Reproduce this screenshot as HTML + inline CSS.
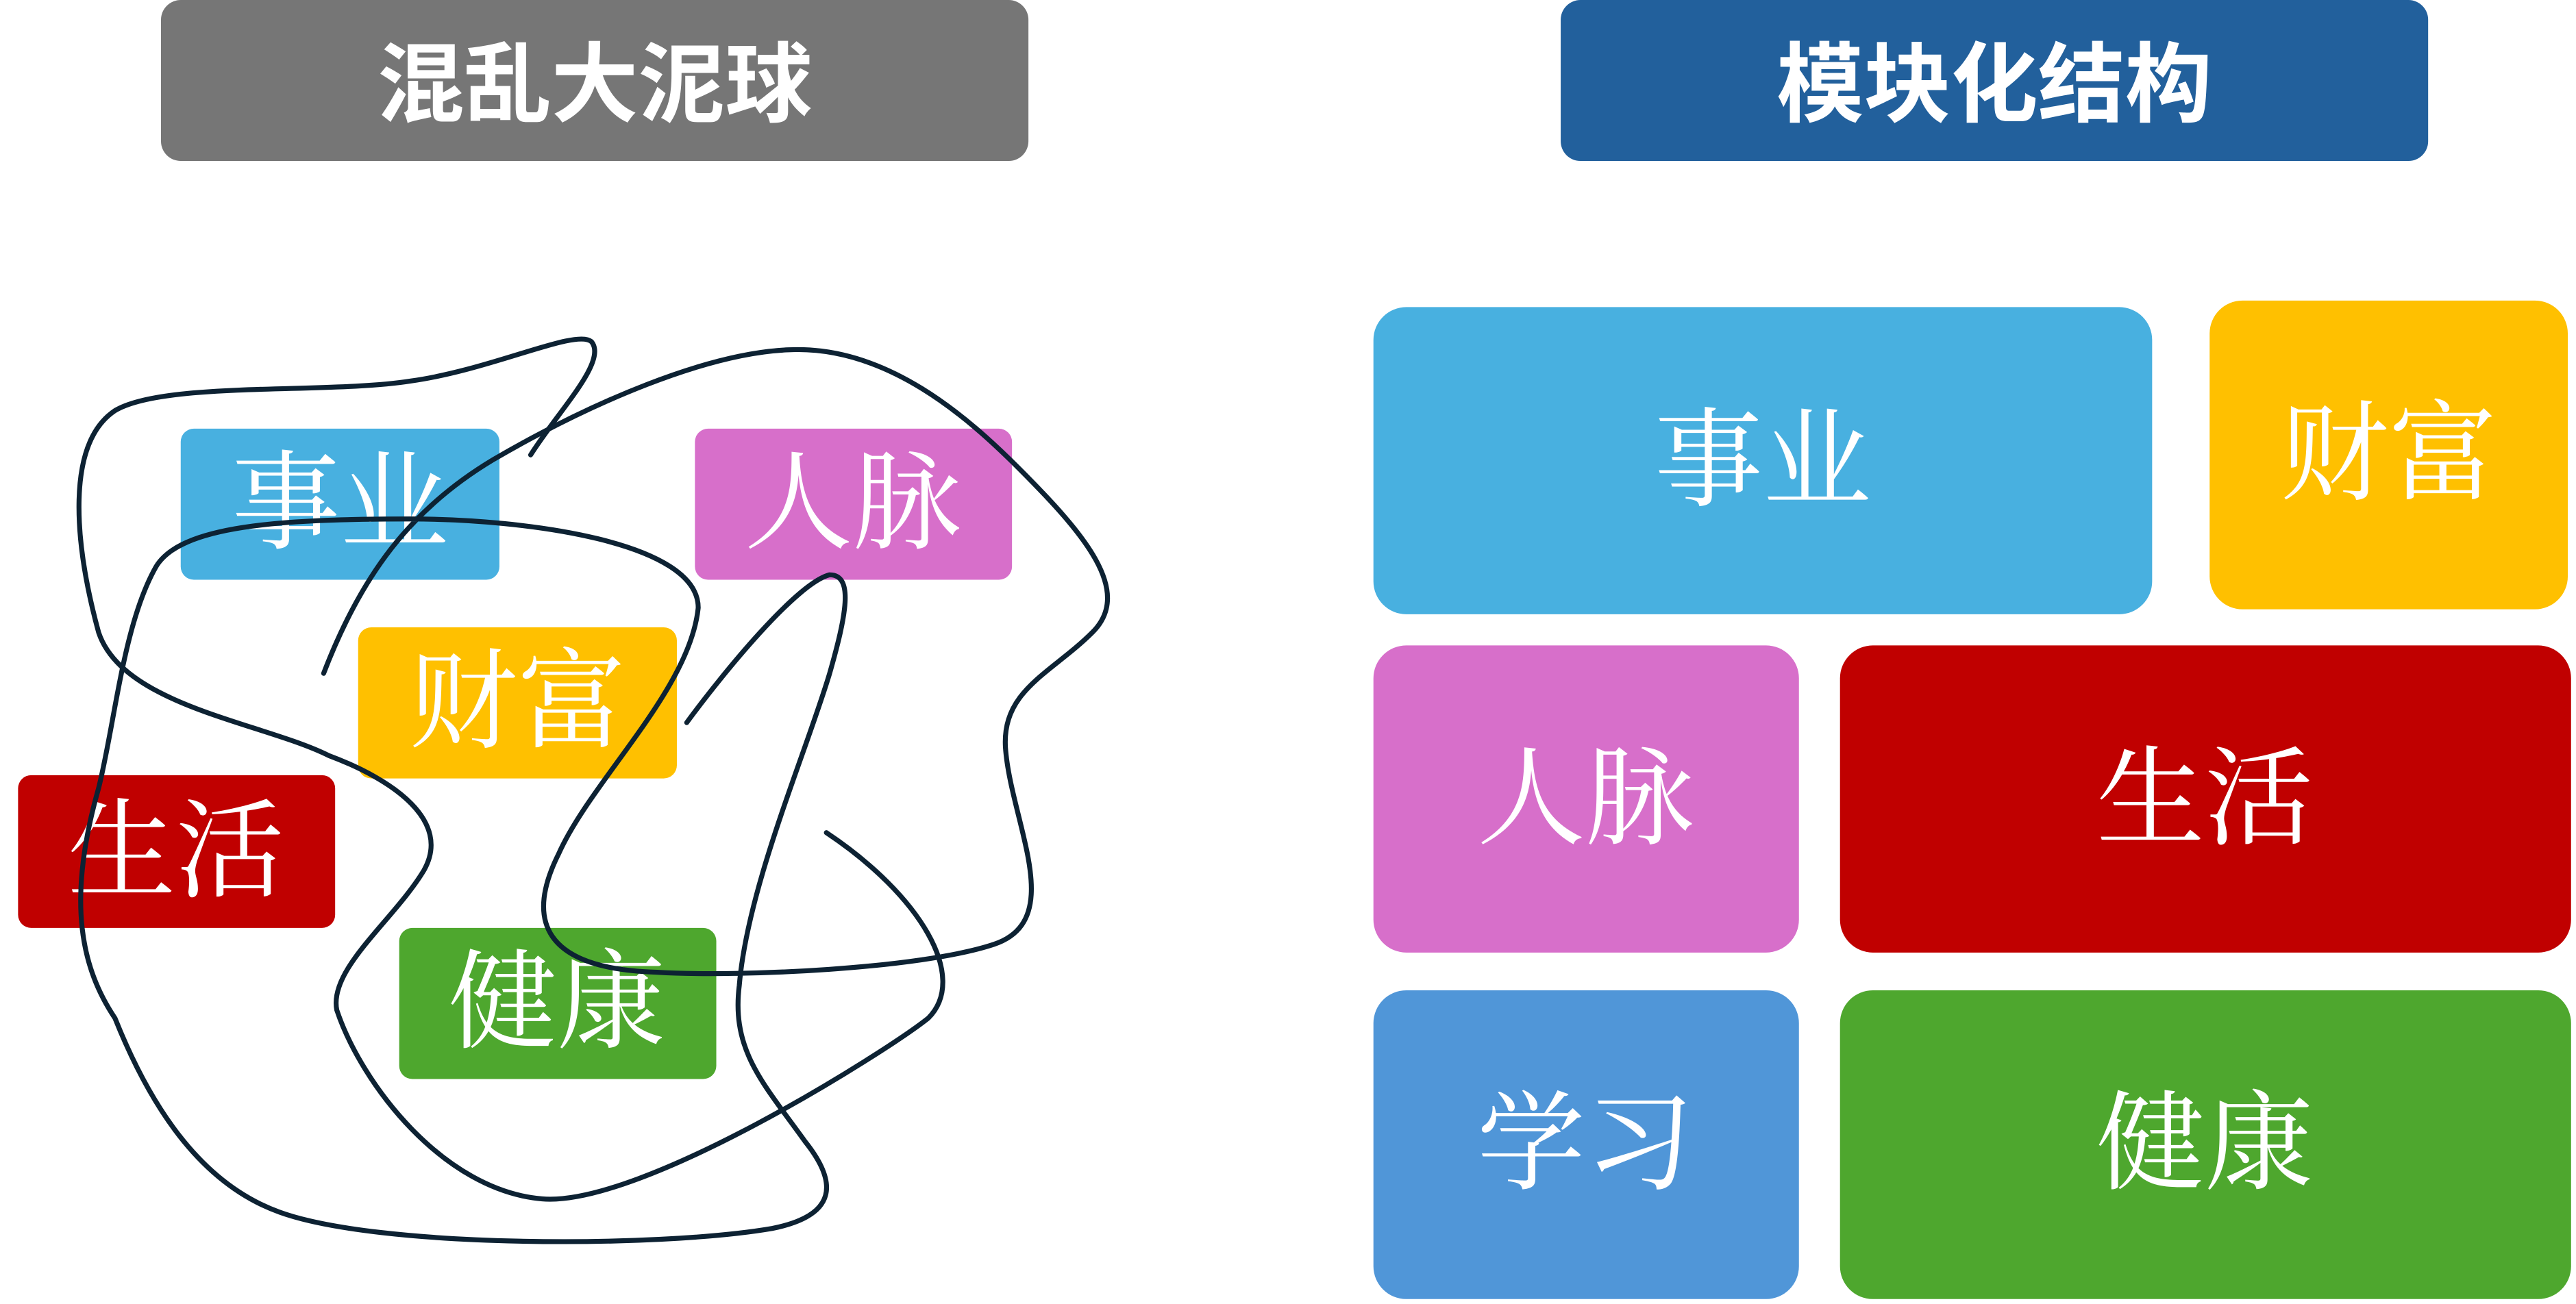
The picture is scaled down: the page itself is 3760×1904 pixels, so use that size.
<!DOCTYPE html>
<html><head><meta charset="utf-8"><style>
html,body{margin:0;padding:0;background:#fff;width:3760px;height:1904px;overflow:hidden}
svg{display:block}
.h{font-family:"Liberation Sans","Noto Sans CJK SC",sans-serif;font-weight:bold;fill:#fff;font-size:53px}
.t{font-family:"Liberation Serif","Noto Serif CJK SC",serif;fill:#fff}
</style></head><body>
<svg width="3760" height="1904" viewBox="0 0 1568 794" xmlns="http://www.w3.org/2000/svg">
<rect x="98" y="0" width="528" height="98" rx="12" fill="#767676"/>
<text class="h" x="362" y="70" text-anchor="middle">混乱大泥球</text>
<rect x="950" y="0" width="528" height="98" rx="12" fill="#22609c"/>
<text class="h" x="1214" y="70" text-anchor="middle">模块化结构</text>

<g class="t" font-size="66" text-anchor="middle">
<rect x="836" y="187" width="474" height="187" rx="20" fill="#48b0e0"/>
<text x="1073" y="303">事业</text>
<rect x="1345" y="183" width="218" height="188" rx="20" fill="#ffc000"/>
<text x="1454" y="299">财富</text>
<rect x="836" y="393" width="259" height="187" rx="20" fill="#d76fca"/>
<text x="965" y="509">人脉</text>
<rect x="1120" y="393" width="445" height="187" rx="20" fill="#c00000"/>
<text x="1342" y="509">生活</text>
<rect x="836" y="603" width="259" height="188" rx="20" fill="#5096d8"/>
<text x="965" y="719">学习</text>
<rect x="1120" y="603" width="445" height="188" rx="20" fill="#4ea72e"/>
<text x="1342" y="719">健康</text>

<rect x="110" y="261" width="194" height="92" rx="8" fill="#48b0e0"/>
<text x="207" y="329">事业</text>
<rect x="423" y="261" width="193" height="92" rx="8" fill="#d76fca"/>
<text x="519" y="329">人脉</text>
<rect x="218" y="382" width="194" height="92" rx="8" fill="#ffc000"/>
<text x="315" y="450">财富</text>
<rect x="11" y="472" width="193" height="93" rx="8" fill="#c00000"/>
<text x="107" y="541">生活</text>
<rect x="243" y="565" width="193" height="92" rx="8" fill="#4ea72e"/>
<text x="339" y="633">健康</text>
</g>

<path fill="none" stroke="#0d2233" stroke-width="3" stroke-linecap="round" d="
M323,277 C340,250 370,220 360,208 C350,200 300,225 250,232 C200,240 100,232 70,250 C40,270 45,330 60,385 C75,430 160,440 200,460 C240,475 275,500 258,530 C240,560 200,590 205,615 C220,660 270,725 330,730 C390,735 540,640 565,620 C590,595 560,545 503,507"/>
<path fill="none" stroke="#0d2233" stroke-width="3" stroke-linecap="round" d="
M197,410 C220,350 250,310 300,280 C360,245 430,215 480,213 C540,210 590,255 620,285 C660,325 690,360 665,385 C640,410 610,420 612,455 C615,500 650,560 605,575 C560,590 450,595 400,592 C330,590 320,560 340,520 C360,475 420,420 425,370 C425,330 320,316 250,316 C170,316 110,320 95,345 C75,380 70,440 60,480 C40,550 50,590 70,620 C90,670 120,720 170,738 C230,760 400,760 470,748 C510,740 510,720 490,695 C465,660 445,640 450,600 C455,540 490,460 505,410 C515,375 520,350 505,350 C485,355 440,410 418,440"/>
</svg>
</body></html>
